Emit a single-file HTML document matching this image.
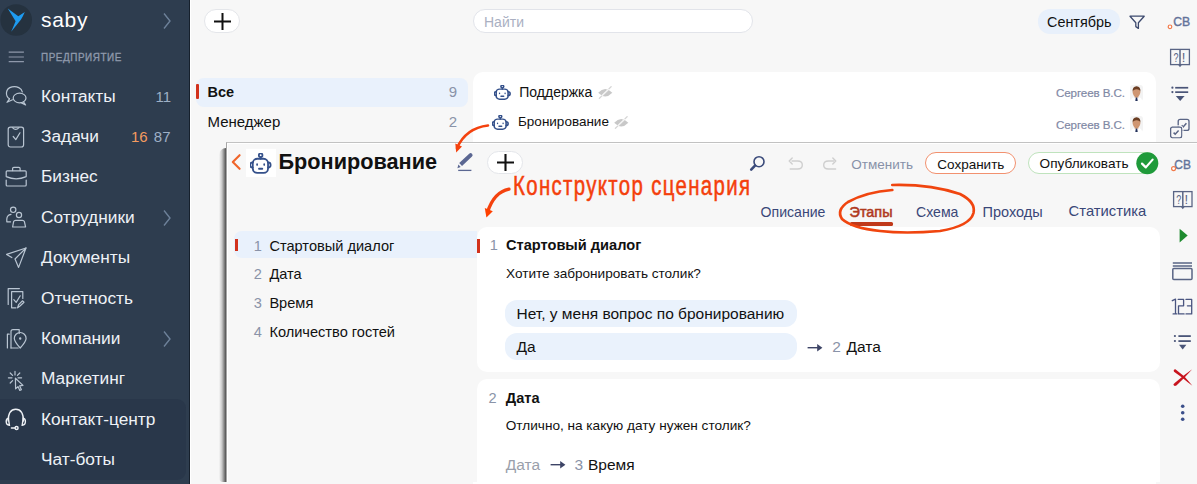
<!DOCTYPE html><html><head><meta charset="utf-8"><style>
html,body{margin:0;padding:0;}
body{width:1197px;height:484px;overflow:hidden;position:relative;background:#f7f7f7;font-family:"Liberation Sans",sans-serif;}
.r{position:absolute;display:block;}
.t{position:absolute;white-space:nowrap;}
</style></head><body>
<div class="r" style="left:0px;top:0px;width:190px;height:484px;background:#2e3d4f;"></div>
<div class="r" style="left:189px;top:0px;width:1px;height:484px;background:#16202c;"></div>
<div class="r" style="left:190px;top:0px;width:1px;height:484px;background:#ffffff;"></div>
<div class="r" style="left:0px;top:399px;width:186px;height:81px;background:#29374a;border-radius:0 9px 9px 0;"></div>
<svg class="r" style="left:0px;top:0px;" width="190" height="484" viewBox="0 0 190 484">
<circle cx="16.2" cy="20" r="15.8" fill="#25323f"/>
<path d="M7.8 8.6 L18.3 16.2 L24.8 12 Q23 16.5 21 19.4 L11.2 31.8 L15.6 21.2 Z" fill="#1e9bf0"/>
<path d="M4 1.5 L10 9 L4 16.5" transform="translate(160,12)" fill="none" stroke="#6d8199" stroke-width="1.4"/>
<path d="M8.7 52.1h15.2M8.7 57h15.2M8.7 61.6h15.2" stroke="#8e98aa" stroke-width="1.2"/>
<g fill="none" stroke="#b9c5d2" stroke-width="1.2" stroke-linejoin="round" stroke-linecap="round">
 <!-- contacts -->
 <path d="M9.5 98.8 C5 96 5.2 88.5 12 86.9 C17 85.8 21.6 88.2 22.3 91.8"/>
 <path d="M9.5 98.8 L7 102.3 L12.5 99.8"/>
 <ellipse cx="19.6" cy="98" rx="6.4" ry="4.8"/>
 <path d="M23.5 101.8 L25.6 105 L21 102.6"/>
 <!-- tasks -->
 <rect x="8.2" y="127.2" width="15.4" height="19.8" rx="2.2"/>
 <path d="M12.5 127.6 Q15.6 131 19 127.6"/>
 <path d="M13.2 136.5 L15.8 139.6 L20 132.8"/>
 <!-- briefcase -->
 <path d="M12.6 170.6 V168.4 Q12.6 167.3 13.8 167.3 H18.9 Q20.1 167.3 20.1 168.4 V170.6"/>
 <path d="M6.2 176.6 V171.8 Q6.2 170.8 7.2 170.8 H25.2 Q26.2 170.8 26.2 171.8 V176.6 Q16.2 181 6.2 176.6 Z"/>
 <path d="M6.2 180 V185 Q6.2 186 7.2 186 H25.2 Q26.2 186 26.2 185 V180"/>
 <!-- people -->
 <circle cx="13.2" cy="209.8" r="2.7"/>
 <path d="M11 214.3 Q7 215 6.8 219 V221.8 H10.6"/>
 <circle cx="19" cy="215" r="2.6"/>
 <path d="M12.6 227 L13.6 221.6 Q14.2 220.4 15.6 220.4 H22.4 Q23.8 220.4 24.4 221.6 L25.6 227 Z"/>
 <!-- plane -->
 <path d="M26 248 L6.6 254.4 L11.8 257.6"/>
 <path d="M26 248 L18.6 267.4 L15 259 Z"/>
 <!-- reports -->
 <path d="M8.2 304.5 V288.6 H19.4"/>
 <path d="M22.8 298.5 V291.6 H11.6 V307.8 H16"/>
 <path d="M13.8 299.6 L16.2 302.4 L20.2 295.8"/>
 <path d="M17.6 307.8 L18.6 304.6 L22.6 300.8 L24 302.2 L20 306 Z"/>
 <!-- companies -->
 <path d="M7.4 348 V334.2 H9.2"/>
 <path d="M11 348 V331.6 Q11 329.6 13 329.6 H19.2 V333.4"/>
 <path d="M11 348 H18.2"/>
 <path d="M20.2 348 C16.2 343.4 14.3 340.6 14.3 338.4 A5.9 5.9 0 0 1 26.1 338.4 C26.1 340.6 24.2 343.4 20.2 348 Z"/>
 <circle cx="20.2" cy="338.5" r="0.6" fill="#b9c5d2"/>
 <!-- marketing -->
 <path d="M15 371.4 V375 M8.4 377.8 H12 M10.2 373 L12.6 375.4 M19.8 373 L17.4 375.4 M10.2 383 L12.6 380.6 M18 377.8 H21.6"/>
 <path d="M15.4 378.2 L23 385.4 L19.6 385.8 L21.4 389.8 L19.8 390.4 L18 386.6 L15.6 388.8 Z"/>
</g>
<g fill="none" stroke="#eef1f5" stroke-width="1.4" stroke-linecap="round">
 <path d="M8.2 421 Q8.2 409.2 15.8 409.2 Q23.4 409.2 23.4 421"/>
 <path d="M8.4 418.2 Q6.2 418.6 6.2 421.5 Q6.2 425 9.4 425.2 Z"/>
 <path d="M23.2 418.2 Q25.4 418.6 25.4 421.5 Q25.4 425 22.2 425.2 Z"/>
 <path d="M11.4 428 H15"/>
 <circle cx="16.6" cy="428" r="1.5"/>
</g>
</svg>
<div class="t" style="left:41px;top:9.42px;font-size:21px;line-height:21px;color:#ffffff;font-weight:400;letter-spacing:0.7px;">saby</div>
<div class="t" style="left:40.7px;top:51.89px;font-size:11px;line-height:11px;color:#8e99ab;font-weight:400;letter-spacing:0.62px;transform:scaleX(0.9);transform-origin:0 0;-webkit-text-stroke:0.35px #8e99ab;">ПРЕДПРИЯТИЕ</div>
<div class="t" style="left:41px;top:87.96px;font-size:17.3px;line-height:17.3px;color:#eef2f6;font-weight:400;">Контакты</div>
<div class="t" style="left:41px;top:127.96px;font-size:17.3px;line-height:17.3px;color:#eef2f6;font-weight:400;">Задачи</div>
<div class="t" style="left:41px;top:168.16px;font-size:17.3px;line-height:17.3px;color:#eef2f6;font-weight:400;">Бизнес</div>
<div class="t" style="left:41px;top:208.76px;font-size:17.3px;line-height:17.3px;color:#eef2f6;font-weight:400;">Сотрудники</div>
<div class="t" style="left:41px;top:248.76px;font-size:17.3px;line-height:17.3px;color:#eef2f6;font-weight:400;">Документы</div>
<div class="t" style="left:41px;top:289.56px;font-size:17.3px;line-height:17.3px;color:#eef2f6;font-weight:400;">Отчетность</div>
<div class="t" style="left:41px;top:329.96px;font-size:17.3px;line-height:17.3px;color:#eef2f6;font-weight:400;">Компании</div>
<div class="t" style="left:41px;top:370.16px;font-size:17.3px;line-height:17.3px;color:#eef2f6;font-weight:400;">Маркетинг</div>
<div class="t" style="left:41px;top:410.76px;font-size:17.3px;line-height:17.3px;color:#eef2f6;font-weight:400;">Контакт-центр</div>
<div class="t" style="left:41px;top:451.16px;font-size:17.3px;line-height:17.3px;color:#eef2f6;font-weight:400;">Чат-боты</div>
<div class="t" style="right:1026px;top:89.30px;font-size:15px;line-height:15px;color:#9eb0c6;font-weight:400;">11</div>
<div class="t" style="right:1049.4px;top:129.30px;font-size:15px;line-height:15px;color:#f49b5f;font-weight:400;">16</div>
<div class="t" style="right:1026.5px;top:129.30px;font-size:15px;line-height:15px;color:#9eb0c6;font-weight:400;">87</div>
<svg class="r" style="left:160px;top:209px;" width="14" height="18" viewBox="0 0 14 18"><path d="M4 1.5 L10 9 L4 16.5" fill="none" stroke="#6d8199" stroke-width="1.4"/></svg>
<svg class="r" style="left:160px;top:330px;" width="14" height="18" viewBox="0 0 14 18"><path d="M4 1.5 L10 9 L4 16.5" fill="none" stroke="#6d8199" stroke-width="1.4"/></svg>
<div class="r" style="left:204px;top:9px;width:36px;height:24px;background:#fff;border:1px solid #e4e6ea;border-radius:12px;box-sizing:border-box;"></div>
<svg class="r" style="left:213px;top:12px;" width="19" height="19" viewBox="0 0 19 19"><path d="M9.5 1v17M1 9.5h17" stroke="#111" stroke-width="2"/></svg>
<div class="r" style="left:473px;top:9px;width:280px;height:24px;background:#fff;border:1px solid #e2e4ea;border-radius:12px;box-sizing:border-box;"></div>
<div class="t" style="left:484px;top:15.15px;font-size:14px;line-height:14px;color:#aab0c2;font-weight:400;">Найти</div>
<div class="r" style="left:1038px;top:9px;width:82px;height:24.5px;background:#e8f0fb;border-radius:12px;"></div>
<div class="t" style="left:1047px;top:15.01px;font-size:14.4px;line-height:14.4px;color:#111;font-weight:400;">Сентябрь</div>
<svg class="r" style="left:1128px;top:14px;" width="18" height="16" viewBox="0 0 18 16"><path d="M2 2.2h14.2l-5.8 6.6v5.6l-2.6 -1.8v-3.8z" fill="none" stroke="#3d4a6e" stroke-width="1.3" stroke-linejoin="round"/></svg>
<div class="t" style="left:1173.2px;top:16.47px;font-size:12.2px;line-height:12.2px;color:#64739a;font-weight:400;-webkit-text-stroke:0.4px #64739a;">СВ</div>
<svg class="r" style="left:1166px;top:23px;" width="8" height="8" viewBox="0 0 8 8"><circle cx="4" cy="3.8" r="1.8" fill="#fff" stroke="#f27b4b" stroke-width="1.2"/></svg>
<div class="r" style="left:196px;top:77.5px;width:272px;height:29.0px;background:#e9f1fc;border-radius:8px;"></div>
<div class="r" style="left:196px;top:84px;width:3px;height:15px;background:#d2321c;border-radius:1px;"></div>
<div class="t" style="left:207.5px;top:84.73px;font-size:14.5px;line-height:14.5px;color:#111;font-weight:700;">Все</div>
<div class="t" style="right:740px;top:84.30px;font-size:15px;line-height:15px;color:#8a93a8;font-weight:400;">9</div>
<div class="t" style="left:207.5px;top:113.70px;font-size:15px;line-height:15px;color:#111;font-weight:400;">Менеджер</div>
<div class="t" style="right:740px;top:113.70px;font-size:15px;line-height:15px;color:#8a93a8;font-weight:400;">2</div>
<div class="r" style="left:472.7px;top:72.3px;width:683.3px;height:411.7px;background:#fff;border-radius:10px 10px 0 0;"></div>
<svg class="r" style="left:494px;top:84.8px;" width="18.0" height="16.5" viewBox="0 0 18.0 16.5"><g transform="scale(0.75,0.69)" fill="none" stroke="#34508a" stroke-width="2.1" stroke-linecap="round">
<circle cx="11.1" cy="2.3" r="1.9"/><path d="M11.1 4.2 V6"/>
<rect x="2.9" y="6" width="15.9" height="14.7" rx="4.6"/>
<path d="M2.9 9.8 A2.7 2.7 0 0 0 2.9 15.2"/><path d="M18.8 9.8 A2.7 2.7 0 0 1 18.8 15.2"/>
<path d="M9.4 16.4 H12.8" stroke-width="2.205"/></g>
<g transform="scale(0.75,0.69)" fill="#34508a"><ellipse cx="7.4" cy="12.1" rx="0.9" ry="1.35"/><ellipse cx="14.8" cy="12.1" rx="0.9" ry="1.35"/></g></svg>
<div class="t" style="left:519.3px;top:84.95px;font-size:14px;line-height:14px;color:#111;font-weight:400;">Поддержка</div>
<svg class="r" style="left:597.5px;top:86px;" width="15" height="13" viewBox="0 0 15 13"><path d="M0.2 6.8 Q7.2 -0.6 14.3 6.8 Q7.2 14.2 0.2 6.8 Z" fill="#c8c8c8"/><path d="M1 12.7 L13.5 0.3" stroke="#d4d4d4" stroke-width="1.2"/><path d="M3.6 10.1 L10.9 2.9" stroke="#f4f4f4" stroke-width="1.4"/></svg>
<svg class="r" style="left:492.4px;top:114.8px;" width="18.0" height="16.5" viewBox="0 0 18.0 16.5"><g transform="scale(0.75,0.69)" fill="none" stroke="#34508a" stroke-width="2.1" stroke-linecap="round">
<circle cx="11.1" cy="2.3" r="1.9"/><path d="M11.1 4.2 V6"/>
<rect x="2.9" y="6" width="15.9" height="14.7" rx="4.6"/>
<path d="M2.9 9.8 A2.7 2.7 0 0 0 2.9 15.2"/><path d="M18.8 9.8 A2.7 2.7 0 0 1 18.8 15.2"/>
<path d="M9.4 16.4 H12.8" stroke-width="2.205"/></g>
<g transform="scale(0.75,0.69)" fill="#34508a"><ellipse cx="7.4" cy="12.1" rx="0.9" ry="1.35"/><ellipse cx="14.8" cy="12.1" rx="0.9" ry="1.35"/></g></svg>
<div class="t" style="left:518px;top:115.27px;font-size:13.5px;line-height:13.5px;color:#111;font-weight:400;">Бронирование</div>
<svg class="r" style="left:614px;top:115.5px;" width="15" height="13" viewBox="0 0 15 13"><path d="M0.2 6.8 Q7.2 -0.6 14.3 6.8 Q7.2 14.2 0.2 6.8 Z" fill="#c8c8c8"/><path d="M1 12.7 L13.5 0.3" stroke="#d4d4d4" stroke-width="1.2"/><path d="M3.6 10.1 L10.9 2.9" stroke="#f4f4f4" stroke-width="1.4"/></svg>
<div class="t" style="left:1056px;top:87.28px;font-size:11.6px;line-height:11.6px;color:#7f89a5;font-weight:400;letter-spacing:-0.1px;-webkit-text-stroke:0.2px #7f89a5;">Сергеев В.С.</div>
<svg class="r" style="left:1130px;top:84.5px;" width="13" height="16" viewBox="0 0 13 16"><rect x="0" y="0" width="13" height="16" rx="3" fill="#f3f3f3"/>
<path d="M0.8 16 Q1.2 11.8 6.5 11.4 Q11.8 11.8 12.2 16 Z" fill="#ffffff"/>
<path d="M4.6 10.6 H8.4 V12.6 H4.6 Z" fill="#c88f6c"/>
<ellipse cx="6.5" cy="7.2" rx="3.8" ry="4.5" fill="#cf9672"/>
<path d="M2.6 7 Q2.2 1.4 6.6 1.3 Q10.8 1.4 10.4 7 Q10 4.2 6.6 4.2 Q3.2 4.2 2.6 7 Z" fill="#6a3d22"/>
<path d="M5.8 12.4 L7.2 12.4 L7.7 16 L5.3 16 Z" fill="#22305a"/></svg>
<div class="t" style="left:1056px;top:119.18px;font-size:11.6px;line-height:11.6px;color:#7f89a5;font-weight:400;letter-spacing:-0.1px;-webkit-text-stroke:0.2px #7f89a5;">Сергеев В.С.</div>
<svg class="r" style="left:1130px;top:116.3px;" width="13" height="16" viewBox="0 0 13 16"><rect x="0" y="0" width="13" height="16" rx="3" fill="#f3f3f3"/>
<path d="M0.8 16 Q1.2 11.8 6.5 11.4 Q11.8 11.8 12.2 16 Z" fill="#ffffff"/>
<path d="M4.6 10.6 H8.4 V12.6 H4.6 Z" fill="#c88f6c"/>
<ellipse cx="6.5" cy="7.2" rx="3.8" ry="4.5" fill="#cf9672"/>
<path d="M2.6 7 Q2.2 1.4 6.6 1.3 Q10.8 1.4 10.4 7 Q10 4.2 6.6 4.2 Q3.2 4.2 2.6 7 Z" fill="#6a3d22"/>
<path d="M5.8 12.4 L7.2 12.4 L7.7 16 L5.3 16 Z" fill="#22305a"/></svg>
<div class="r" style="left:219px;top:148px;width:7px;height:334px;background:linear-gradient(to right,rgba(0,0,0,0),rgba(0,0,0,0.18) 40%,rgba(0,0,0,0.68));border-radius:7px 0 0 4px;"></div>
<div class="r" style="left:225.5px;top:141.6px;width:971.5px;height:340.4px;background:#f7f7f7;border-top:1.4px solid #c2c2c2;border-left:1.4px solid #a6a6a6;box-sizing:border-box;"></div>
<div class="r" style="left:227px;top:143px;width:970px;height:1px;background:#ffffff;"></div>
<div class="r" style="left:227px;top:143px;width:1.1999999999999886px;height:339px;background:#ffffff;"></div>
<svg class="r" style="left:226px;top:142px;" width="971" height="342" viewBox="0 0 971 342">
<path d="M13.6 13.2 L6.8 20 L13.6 26.8" fill="none" stroke="#f0652a" stroke-width="2.1" stroke-linecap="round" stroke-linejoin="round"/>
<rect x="20" y="6.8" width="30" height="28.2" fill="#ffffff"/>
</svg>
<svg class="r" style="left:249.8px;top:153.2px;" width="23.04" height="21.119999999999997" viewBox="0 0 23.04 21.119999999999997"><g transform="scale(0.96,0.96)" fill="none" stroke="#34508a" stroke-width="1.85" stroke-linecap="round">
<circle cx="11.1" cy="2.3" r="1.9"/><path d="M11.1 4.2 V6"/>
<rect x="2.9" y="6" width="15.9" height="14.7" rx="4.6"/>
<path d="M2.9 9.8 A2.7 2.7 0 0 0 2.9 15.2"/><path d="M18.8 9.8 A2.7 2.7 0 0 1 18.8 15.2"/>
<path d="M9.4 16.4 H12.8" stroke-width="1.9425000000000001"/></g>
<g transform="scale(0.96,0.96)" fill="#34508a"><ellipse cx="7.4" cy="12.1" rx="0.9" ry="1.35"/><ellipse cx="14.8" cy="12.1" rx="0.9" ry="1.35"/></g></svg>
<div class="t" style="left:278.5px;top:150.93px;font-size:21.7px;line-height:21.7px;color:#111;font-weight:700;">Бронирование</div>
<svg class="r" style="left:450px;top:146px;" width="30" height="30" viewBox="0 0 30 30"><path d="M9.2 17.1 L19.2 7.65 Q20.6 6.3 22 7.7 Q23.4 9.1 22 10.55 L12 20.05 Z" fill="#5b6792"/><path d="M8.4 18.6 L10.7 20.9 L7.4 22.3 Z" fill="#5b6792"/><path d="M8.2 24.4 H21.4" stroke="#5b6792" stroke-width="1.3"/></svg>
<div class="r" style="left:486.5px;top:150.6px;width:36.89999999999998px;height:23.80000000000001px;background:#fff;border:1px solid #e4e6ea;border-radius:12px;box-sizing:border-box;"></div>
<svg class="r" style="left:496px;top:153px;" width="19" height="19" viewBox="0 0 19 19"><path d="M9.5 1v17M1 9.5h17" stroke="#111" stroke-width="2.1"/></svg>
<svg class="r" style="left:744px;top:150px;" width="100" height="28" viewBox="0 0 100 28">
<circle cx="15" cy="11.7" r="5" fill="none" stroke="#3a4a7a" stroke-width="1.6"/>
<path d="M11 15.6 L7.2 19.6" stroke="#3a4a7a" stroke-width="2.6" stroke-linecap="round"/>
<g fill="none" stroke="#cfcfcf" stroke-width="1.4" stroke-linecap="round" stroke-linejoin="round">
<path d="M48 11 H53.6 Q58.3 11 58.3 15 Q58.3 19 53.6 19 H46.2"/><path d="M48.2 8 L45.2 11 L48.2 14"/>
<path d="M90 11 H84.4 Q79.7 11 79.7 15 Q79.7 19 84.4 19 H91.6"/><path d="M88.8 8 L91.8 11 L88.8 14"/>
</g></svg>
<div class="t" style="left:851.3px;top:157.77px;font-size:13.5px;line-height:13.5px;color:#8791a8;font-weight:400;">Отменить</div>
<div class="r" style="left:924.6px;top:152.3px;width:91.89999999999998px;height:21.899999999999977px;background:#fff;border:1px solid #f2916f;border-radius:12px;box-sizing:border-box;"></div>
<div class="t" style="left:937.3px;top:157.57px;font-size:13.5px;line-height:13.5px;color:#111;font-weight:400;">Сохранить</div>
<div class="r" style="left:1028px;top:152px;width:130px;height:22.19999999999999px;background:#fff;border:1px solid #bfe3bd;border-radius:12px;box-sizing:border-box;"></div>
<div class="t" style="left:1039.6px;top:157.49px;font-size:13.6px;line-height:13.6px;color:#111;font-weight:400;">Опубликовать</div>
<svg class="r" style="left:1135.6px;top:152.4px;" width="23" height="23" viewBox="0 0 23 23"><circle cx="11.3" cy="11.2" r="11" fill="#1f9a3a"/><path d="M6 11.6 L9.8 15.4 L16.6 7.6" fill="none" stroke="#fff" stroke-width="2.2" stroke-linecap="round" stroke-linejoin="round"/></svg>
<div class="t" style="left:760.6px;top:205.06px;font-size:14.1px;line-height:14.1px;color:#3a4778;font-weight:400;">Описание</div>
<div class="t" style="left:849.6px;top:204.81px;font-size:14.4px;line-height:14.4px;color:#b03a1e;font-weight:400;-webkit-text-stroke:0.55px #b03a1e;">Этапы</div>
<div class="r" style="left:850px;top:222.4px;width:43px;height:3.1999999999999886px;background:#c0391a;border-radius:1.5px;"></div>
<div class="t" style="left:916px;top:205.06px;font-size:14.1px;line-height:14.1px;color:#3a4778;font-weight:400;">Схема</div>
<div class="t" style="left:982.6px;top:204.73px;font-size:14.5px;line-height:14.5px;color:#3a4778;font-weight:400;">Проходы</div>
<div class="t" style="left:1068.6px;top:204.47px;font-size:14.8px;line-height:14.8px;color:#3a4778;font-weight:400;">Статистика</div>
<div class="r" style="left:233.6px;top:231.2px;width:243.1px;height:27.30000000000001px;background:#e9f1fc;border-radius:8px 0 0 8px;"></div>
<div class="r" style="left:234.9px;top:238.6px;width:2.6999999999999886px;height:12.400000000000006px;background:#d2321c;"></div>
<div class="t" style="left:253.8px;top:238.64px;font-size:14.6px;line-height:14.6px;color:#8a93a8;font-weight:400;">1</div>
<div class="t" style="left:269.4px;top:238.64px;font-size:14.6px;line-height:14.6px;color:#111;font-weight:400;">Стартовый диалог</div>
<div class="t" style="left:253.8px;top:267.14px;font-size:14.6px;line-height:14.6px;color:#8a93a8;font-weight:400;">2</div>
<div class="t" style="left:269.4px;top:267.14px;font-size:14.6px;line-height:14.6px;color:#111;font-weight:400;">Дата</div>
<div class="t" style="left:253.8px;top:295.64px;font-size:14.6px;line-height:14.6px;color:#8a93a8;font-weight:400;">3</div>
<div class="t" style="left:269.4px;top:295.64px;font-size:14.6px;line-height:14.6px;color:#111;font-weight:400;">Время</div>
<div class="t" style="left:253.8px;top:324.64px;font-size:14.6px;line-height:14.6px;color:#8a93a8;font-weight:400;">4</div>
<div class="t" style="left:269.4px;top:324.64px;font-size:14.6px;line-height:14.6px;color:#111;font-weight:400;">Количество гостей</div>
<div class="r" style="left:476.7px;top:226.5px;width:683.7px;height:145.10000000000002px;background:#fff;border-radius:10px;"></div>
<div class="r" style="left:477px;top:378.6px;width:683.4000000000001px;height:103.39999999999998px;background:#fff;border-radius:10px 10px 0 0;"></div>
<div class="r" style="left:477px;top:238.6px;width:2.8000000000000114px;height:14.300000000000011px;background:#d2321c;"></div>
<div class="t" style="left:489.8px;top:237.64px;font-size:14.6px;line-height:14.6px;color:#8a93a8;font-weight:400;">1</div>
<div class="t" style="left:506px;top:237.64px;font-size:14.6px;line-height:14.6px;color:#111;font-weight:700;">Стартовый диалог</div>
<div class="t" style="left:506px;top:266.89px;font-size:13.6px;line-height:13.6px;color:#111;font-weight:400;">Хотите забронировать столик?</div>
<div class="r" style="left:505.4px;top:299.6px;width:292.1px;height:27.399999999999977px;background:#eaf2fc;border-radius:12px;"></div>
<div class="r" style="left:505.4px;top:332.8px;width:292.1px;height:27.399999999999977px;background:#eaf2fc;border-radius:12px;"></div>
<div class="t" style="left:516.5px;top:305.88px;font-size:15.5px;line-height:15.5px;color:#111;font-weight:400;">Нет, у меня вопрос по бронированию</div>
<div class="t" style="left:516.5px;top:339.18px;font-size:15.5px;line-height:15.5px;color:#111;font-weight:400;">Да</div>
<svg class="r" style="left:804px;top:341px;" width="22" height="14" viewBox="0 0 22 14"><path d="M3.6 6.7 H17" stroke="#3d4466" stroke-width="1.4"/><path d="M13.2 3 L18.4 6.7 L13.2 10.4 Z" fill="#3d4466"/></svg>
<div class="t" style="left:832.3px;top:339.18px;font-size:15.5px;line-height:15.5px;color:#8a93a8;font-weight:400;">2</div>
<div class="t" style="left:846.6px;top:339.18px;font-size:15.5px;line-height:15.5px;color:#111;font-weight:400;">Дата</div>
<div class="t" style="left:488.6px;top:390.64px;font-size:14.6px;line-height:14.6px;color:#8a93a8;font-weight:400;">2</div>
<div class="t" style="left:505.8px;top:390.64px;font-size:14.6px;line-height:14.6px;color:#111;font-weight:700;">Дата</div>
<div class="t" style="left:505.8px;top:418.99px;font-size:13.6px;line-height:13.6px;color:#111;font-weight:400;">Отлично, на какую дату нужен столик?</div>
<div class="t" style="left:505.8px;top:457.28px;font-size:15.5px;line-height:15.5px;color:#9a9fab;font-weight:400;">Дата</div>
<svg class="r" style="left:546.6px;top:458.4px;" width="22" height="14" viewBox="0 0 22 14"><path d="M3.6 6.7 H17" stroke="#3d4466" stroke-width="1.4"/><path d="M13.2 3 L18.4 6.7 L13.2 10.4 Z" fill="#3d4466"/></svg>
<div class="t" style="left:574.5px;top:457.28px;font-size:15.5px;line-height:15.5px;color:#8a93a8;font-weight:400;">3</div>
<div class="t" style="left:588px;top:457.28px;font-size:15.5px;line-height:15.5px;color:#111;font-weight:400;">Время</div>
<svg class="r" style="left:1160px;top:40px;" width="37" height="444" viewBox="0 0 37 444">
<g fill="none" stroke="#5a6585" stroke-width="1.5">
 <rect x="10.6" y="9.4" width="18.8" height="15.2" stroke-width="1.3"/><path d="M20 9.4 V24.6"/><path d="M18.8 24.6 L20 26 L21.2 24.6"/>
 <rect x="18.2" y="79.4" width="10.8" height="11" rx="2" stroke-width="1.35"/>
 <path d="M21.6 85.4 L23.2 87 L26.4 83.2" stroke-width="1.5"/>
 <rect x="10.6" y="87" width="11.2" height="10.8" rx="2" fill="#f7f7f7" stroke-width="1.35"/><rect x="9.4" y="85.8" width="13.6" height="13.2" rx="3" fill="none" stroke="#f7f7f7" stroke-width="1"/>
 <path d="M13.6 92.6 L15.2 94.2 L18.6 90.6" stroke-width="1.5"/>
</g>
<text x="13.4" y="22.2" font-size="13" font-family="Liberation Sans" fill="#5a6585" textLength="5" lengthAdjust="spacingAndGlyphs">?</text>
<text x="21.8" y="22.2" font-size="13" font-family="Liberation Sans" fill="#5a6585">!</text>
<g fill="#4a5578">
 <circle cx="12.4" cy="47.7" r="1.1"/><circle cx="12.4" cy="52.1" r="1.1"/>
 <rect x="15.2" y="46.9" width="13" height="1.7"/><rect x="15.2" y="51.3" width="13" height="1.7"/>
 <path d="M15.8 56.1 H24.6 L20.2 61 Z"/>
</g>
</svg>
<svg class="r" style="left:1160px;top:142px;" width="37" height="342" viewBox="0 0 37 342">
<text x="14.3" y="26.7" font-size="13.2" font-family="Liberation Sans" fill="#64739a" stroke="#64739a" stroke-width="0.4" textLength="16.6" lengthAdjust="spacingAndGlyphs">СВ</text>
<circle cx="13.6" cy="26.6" r="2" fill="#fff" stroke="#f27b4b" stroke-width="1.2"/>
<g fill="none" stroke="#5a6585" stroke-width="1.5">
 <rect x="13.6" y="49.6" width="18.4" height="15" stroke-width="1.3"/><path d="M22.8 49.6 V64.6"/><path d="M21.6 64.6 L22.8 66 L24 64.6"/>
 <path d="M12.8 120.9 H32 M12.8 124 H32"/><rect x="12.8" y="126.5" width="19.2" height="11.1" rx="1"/>
</g>
<text x="16.2" y="62.2" font-size="13" font-family="Liberation Sans" fill="#5a6585" textLength="5" lengthAdjust="spacingAndGlyphs">?</text>
<text x="24.6" y="62.2" font-size="13" font-family="Liberation Sans" fill="#5a6585">!</text>
<path d="M19.6 86.8 L27.7 93.6 L19.6 100.4 Z" fill="#1e8a2e"/>
<g fill="none" stroke="#4a5580" stroke-width="1.3" stroke-linecap="round" stroke-linejoin="round">
<path d="M12.3 158.7 L15.5 157.1 V171.9 M13.1 171.9 H16.9"/>
<path d="M18.2 157.4 H23.6 V163.8 H18.5 V171.9 H24.1"/>
<path d="M26 157.4 H31.7 V171.9 H26 M27.4 163.8 H31.7"/>
</g>
<g fill="#4a5578">
 <circle cx="14.9" cy="194" r="1.1"/><circle cx="14.9" cy="199" r="1.1"/>
 <rect x="18.4" y="193.2" width="12.4" height="1.8"/><rect x="18.4" y="198.2" width="12.4" height="1.8"/>
 <path d="M19 202.7 H26.4 L22.7 207.6 Z"/>
</g>
<path d="M15.4 227.3 Q13 227.6 14 229.8 L22 235.6 Q27 240 32.4 243.8 Q28 238.6 24.4 234.6 Z" fill="#c8141e"/><path d="M13.4 242.2 Q13.8 244.8 16.4 243.6 Q24 236.6 32.2 227.3 Q23.8 233.2 15.6 240.2 Z" fill="#c8141e"/>
<g fill="#3b4f8a"><circle cx="22.7" cy="264.2" r="1.8"/><circle cx="22.7" cy="270.8" r="1.8"/><circle cx="22.7" cy="277.2" r="1.8"/></g>
</svg>
<svg class="r" style="left:0px;top:0px;" width="1197" height="484" viewBox="0 0 1197 484">
<g fill="none" stroke="#f4420e" stroke-linecap="round">
<path d="M488 125.5 Q466 128 457 148" stroke-width="2.6"/>
<path d="M509 189.1 Q494 192 487.6 212" stroke-width="3.3"/>
<path d="M892.3 185 Q930 184 960 194 Q976 202 973.5 213 Q970 226 940 231 Q905 234 880 231 Q852 228 842 219 Q836 210 848 202 Q866 192 892.3 190" stroke-width="2.7" stroke="#f0450f"/>
</g>
<path d="M455.3 143.6 L456.2 152.4 L462 146.6 Z" fill="#f4420e"/>
<path d="M484.8 208 L486.4 217.4 L492.8 211.2 Z" fill="#ff4000"/>
</svg>
<div class="t" style="left:513.4px;top:171.37px;font-size:28.5px;line-height:28.5px;color:#f43f0c;font-weight:400;letter-spacing:1.9px;transform:scaleX(0.715);transform-origin:0 0;-webkit-text-stroke:0.55px #f43f0c;">Конструктор сценария</div>
</body></html>
